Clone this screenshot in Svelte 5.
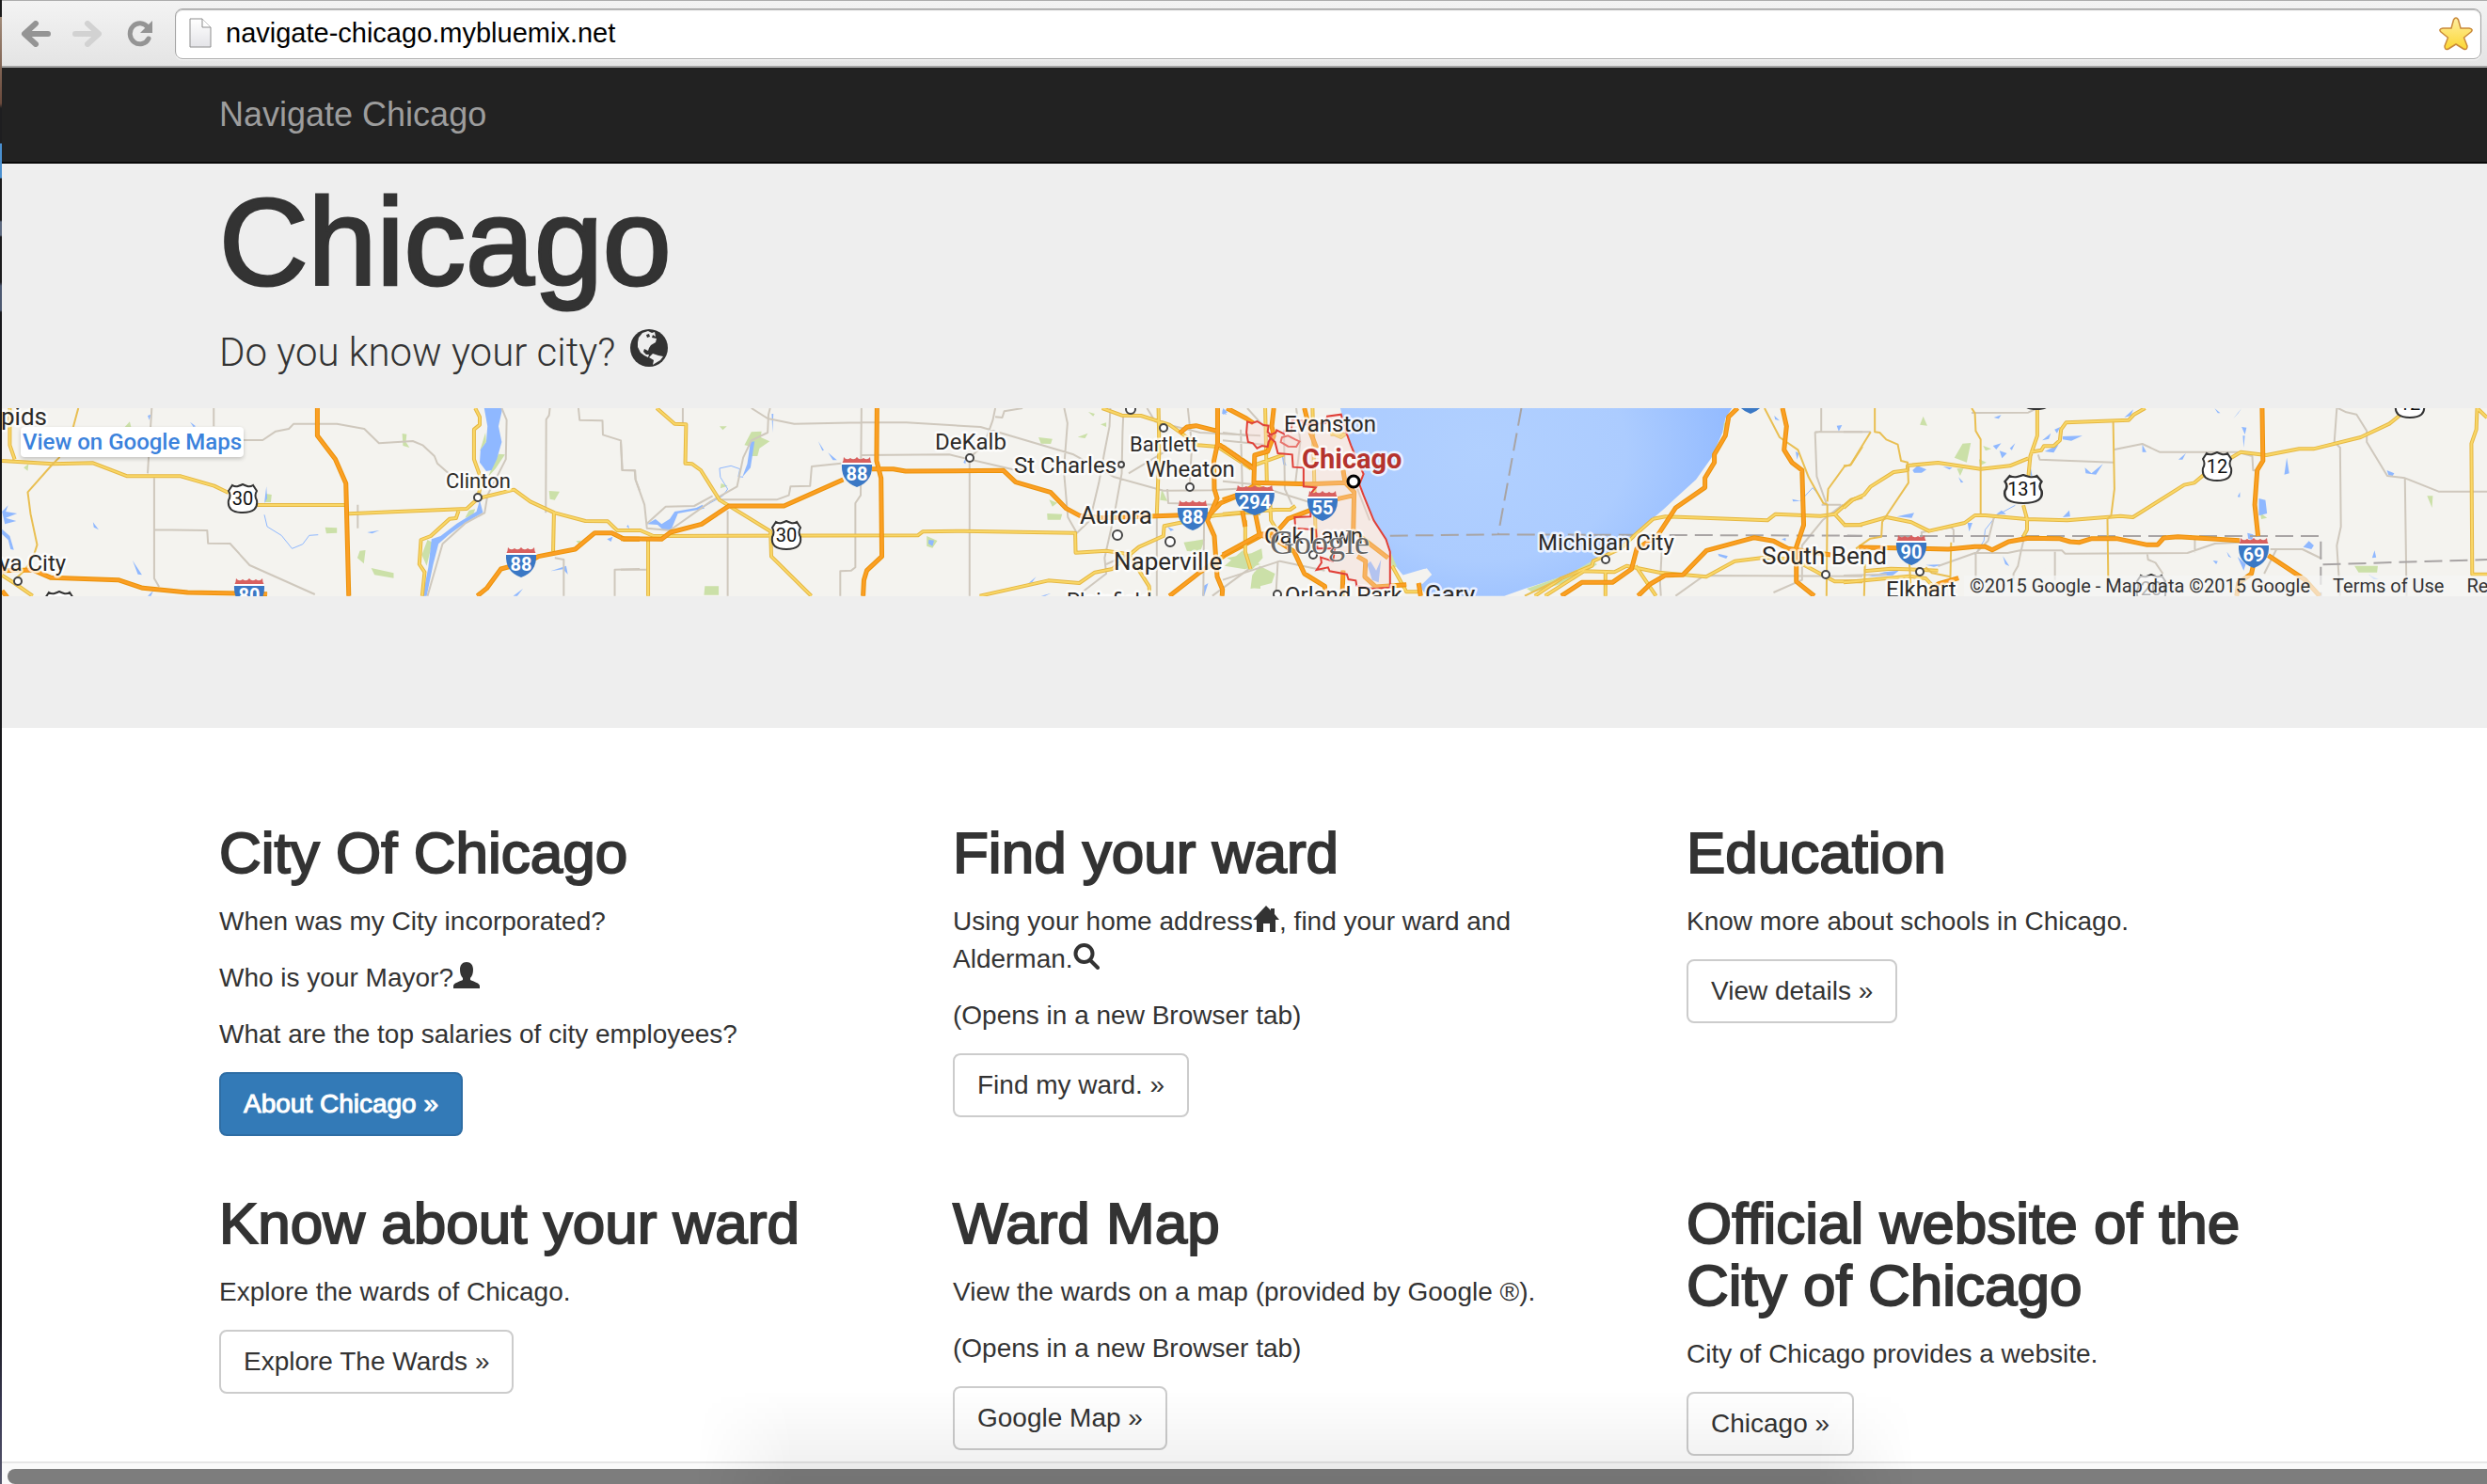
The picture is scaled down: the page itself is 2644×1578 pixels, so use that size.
<script>
let url = "navigate-chicago.mybluemix.net";

// the map strip is cut in tiles, each with its own origin and a 1568 x 690 grid
const tiles = [
    {
        x: 0,
        scale: 0.43367,
        green: "M318,85 L322,105 L306,102Z M58,232 L70,220 L68,242Z M652,315 L666,318 L664,342 L650,342Z M797,422 L826,424 L826,440 L800,442Z M882,497 L896,495 L892,538 L876,520Z M910,552 L965,568 L965,584 L918,574Z M986,123 L997,125 L995,150 L1004,168 L988,162Z M1346,306 L1372,308 L1360,335 L1348,332Z M1190,120 L1192,150 L1176,180Z M1222,188 L1238,190 L1215,235 L1196,262Z M1048,462 L1060,470 L1046,545 L1034,510Z M1150,368 L1165,364 L1160,382 L1140,392Z M1412,466 L1424,464 L1420,476Z",
        water: "M1187,42 L1232,42 L1222,100 L1230,150 L1218,205 L1205,240 L1192,243 L1176,215 L1178,175 L1192,150 L1195,100Z M1176,336 L1184,375 L1140,408 L1100,446 L1075,475 L1062,540 L1046,641 L1036,641 L1050,550 L1058,460 L1080,450 L1120,410 L1168,372Z M5,372 L20,352 L14,372 L42,378 L14,392 L40,402 L12,412Z M5,428 L24,450 L34,494 L26,492 L20,462 L5,444Z M228,406 L242,430 L230,422Z M325,528 L348,574 L338,572Z M362,66 L370,62 L366,80Z M466,86 L480,100 L474,102Z M648,345 L653,292 L655,330Z M900,438 L930,432 L912,442Z M1258,641 L1282,618 L1268,641Z M1350,562 L1388,545 L1392,572 L1380,556Z M362,641 L376,624 L370,641Z M1488,460 L1502,452 L1498,468Z M1536,420 L1540,414 L1543,426Z",
        stream: "M648,382 L655,420 L690,448 L716,490 L742,476 L758,448 L780,446",
        grey: "M372,42 L362,250 M378,265 L378,430 L508,432 L510,473 L564,474 L612,543 L772,636 M378,430 L378,585 L390,612 M524,42 L524,100 M590,144 L644,144 L676,116 L708,108 L720,92 L826,92 L893,108 L929,154 L1012,147 L1036,160 L1065,195 L1072,218 L1110,262 M1230,42 L1242,80 L1240,205 L1195,320 L1188,376 L1140,410 L1085,475 L1048,641 M1348,42 L1346,65 L1339,78 L1338,376 M1360,520 L1382,525 L1382,641 M1418,42 L1421,80 L1477,82 L1478,127 L1522,145 L1525,240 L1557,241 L1558,270 L1568,305 M1507,641 L1507,557 L1568,555 M877,350 L877,425",
        yellow: "M24,42 L24,160 L36,205 M5,210 L130,220 L228,217 L312,259 L443,259 L525,290 L560,312 M630,351 L850,351 M855,379 L975,372 L1144,363 L1172,330 L1260,302 L1300,340 L1360,376 L1435,402 L1490,403 L1513,432 L1568,432 M1358,376 L1356,500 M1165,42 L1176,70 L1176,95 L1162,110 L1162,205 L1180,270 L1172,330 M1124,370 L1118,393 L1102,395 L1056,450 L1032,462 L1028,540 L1041,565 L1035,641 M5,575 L35,600 L80,641",
        thin: "M192,42 L180,100 L145,200 L128,222 L68,310 L75,380 L91,478 L82,515 L60,560 L35,590",
        orange: "M778,42 L778,130 L822,205 L848,282 L855,641 M5,560 L80,558 L125,583 L290,590 L350,616 L460,630 L655,635 M1170,641 L1193,617 L1228,555 L1300,530 L1320,515 L1410,492 L1458,440 L1500,440 L1530,460 L1568,460 M5,625 L18,645",
        dashed: ""
    },
    {
        x: 660,
        scale: 0.43367,
        green: "M242,100 L260,100 L250,112Z M320,118 L345,116 L343,135 L365,148 L340,170 L335,195 L318,195 L322,165 L303,160Z M246,282 L262,290 L244,298Z M206,610 L240,610 L240,638 L204,638Z M750,450 L776,465 L764,488 L750,482Z M1024,135 L1058,140 L1054,156 L1030,155Z M1045,378 L1082,380 L1078,398 L1046,398Z M1050,334 L1070,344 L1058,356Z M1146,54 L1162,60 L1158,68Z M1176,94 L1190,88 L1190,102Z M1326,300 L1340,338 L1322,335Z M1120,134 L1145,122 L1138,138Z M1380,470 L1432,460 L1420,500 L1388,498Z M1480,545 L1525,495 L1530,520 L1568,540 L1530,556Z M1552,566 L1568,560 L1568,618 L1545,616Z",
        water: "M64,412 L85,396 L100,412 L120,395 L132,372 L185,360 L200,350 L205,362 L140,378 L124,428 L105,432 L90,414Z M318,150 L328,148 L318,232 L298,262 L310,220Z M370,60 L374,60 L372,120Z M484,148 L498,176 L494,178Z M508,184 L530,208 L520,208Z M755,462 L768,464 L764,482 L754,474Z M1340,420 L1356,430 L1348,434Z M1425,640 L1428,610 L1440,600 L1430,641Z M840,215 L846,200 L845,220Z M1000,600 L1018,580 L1008,598Z M1030,641 L1055,632 L1040,641Z M1475,48 L1486,62 L1474,60Z",
        stream: "M205,355 L250,322 L262,300 L244,262 L242,234 L270,226 L292,236 L288,260 L300,262",
        grey: "M0,150 L4,240 L34,241 L36,270 L58,350 L64,425 L120,432 L220,340 L285,292 L300,200 L320,145 L360,120 L362,62 L366,42 M64,410 L110,356 L180,354 L225,322 M152,42 L152,92 M245,334 L382,334 L412,320 L416,292 L464,290 L468,228 L540,218 M320,42 L360,75 L425,92 L590,88 L700,88 L882,102 L1110,190 L1210,262 L1330,305 L1450,304 L1530,298 M262,370 L262,641 M590,42 L588,320 L575,345 L575,550 L565,560 L538,562 L538,641 M590,192 L805,190 L962,238 L1000,238 M855,200 L855,641 M855,200 L890,160 L912,80 L918,42 M918,70 L935,72 L940,52 L985,42 M0,557 L62,557 M1087,42 L1095,90 L1086,240 L1096,390 L1118,440 L1150,400 L1172,280 L1186,180 L1198,100 L1200,42 M1232,60 L1230,120 L1228,250 L1210,380 L1186,520 L1190,570 L1130,630 M1290,42 L1310,85 L1420,120 L1568,130 M1340,300 L1342,345 L1460,350 M1314,380 L1314,641 M1430,380 L1428,641 M1245,250 L1360,160 M1390,42 L1400,160 L1394,300 M1450,641 L1545,550 M1190,540 L1250,505",
        yellow: "M88,42 L132,92 L160,94 L158,218 L175,220 L196,240 L242,335 L367,435 L369,515 L467,641 M0,432 L48,432 L80,450 L728,448 L740,436 L840,434 L1114,440 L1115,503 L1190,497 L1245,508 M67,465 L67,641 M880,641 L1048,592 L1124,600 L1162,566 L1205,555 L1270,485 L1330,450 L1332,418 L1455,385 L1540,375 L1568,378 M1318,42 L1320,170 L1314,380 M1180,42 L1228,65 L1275,66 L1345,95 L1415,160 L1463,165 L1545,235 M1245,508 L1295,610 L1297,641",
        thin: "M1530,420 L1530,510 L1545,552",
        orange: "M0,458 L100,460 L122,438 L198,412 L265,354 L400,354 L545,270 M615,236 L668,236 L698,243 L938,241 L968,278 L1053,310 L1092,362 L1125,385 L1180,392 L1445,380 L1470,345 L1520,318 M628,42 L627,210 L638,265 L640,515 L603,560 L596,590 L594,641 M1463,42 L1463,155 L1454,210 L1455,300 L1462,330 L1438,400 L1455,450 L1462,580 L1475,620 L1474,641 M1370,122 L1388,102 L1410,98 L1463,115 M1463,155 L1555,235 M1568,450 L1480,512 L1420,565 L1345,641",
        dashed: ""
    },
    {
        x: 1300,
        scale: 0.43367,
        green: "M10,520 L70,505 L95,490 L98,520 L70,560Z M90,545 L128,570 L120,600 L68,618 L72,575Z M1228,90 L1240,85 L1228,125Z M905,530 L918,540 L860,590 L760,630 L745,618 L850,570Z M410,498 L426,545 L415,560Z",
        water: "M1352,66 L1365,82 L1354,78Z M1404,180 L1412,186 L1408,206Z M1505,98 L1518,96 L1510,116Z M1214,506 L1238,514 L1234,522 L1216,514Z M1396,332 L1416,338 L1398,340Z M1370,460 L1380,456 L1380,466Z M144,185 L156,225 L148,222Z M354,540 L366,590 L382,598 L388,525 L376,560 L362,530Z M0,42 L12,55 L0,62Z",
        stream: "M1416,338 L1446,296 L1462,320",
        grey: "M44,110 L48,300 M0,145 L110,160 M0,120 L60,130 M0,275 L75,285 M150,110 L152,300 L170,350 M110,300 L220,345 M60,42 L100,100 M0,590 L140,530 L250,560 M135,530 L130,641 M1467,42 L1467,116 L1452,120 L1456,260 L1480,348 M1452,118 L1568,118 M1468,350 L1515,350 M1520,350 L1470,400 L1420,480 L1420,590 L1350,630 M1065,460 L1076,500 L1072,600 L1074,641 M1110,641 L1180,576 L1568,578 M180,42 L190,150 L178,280 M360,400 L330,300",
        yellow: "M104,42 L108,280 M75,285 L115,310 L118,400 L132,430 M0,380 L70,372 L130,366 L165,366 L178,354 M55,400 L55,500 L68,555 M220,42 L228,480 M150,190 L75,225 M264,120 L290,135 L300,125 L264,125 M1055,395 L1085,388 L1335,400 L1355,380 L1465,386 L1500,380 L1540,335 L1568,325 M1500,380 L1525,415 L1568,415 M1055,395 L1012,445 L975,490 L908,530 L905,545 L830,585 L765,641 M790,641 L885,562 L960,565 L990,545 L1070,566 L1185,580 L1255,530 L1330,518 L1400,525 L1500,595 L1568,595 M938,565 L938,641 M1012,545 L1062,641 M415,545 L450,628 L480,628",
        thin: "M1328,42 L1365,135 L1410,175 L1436,262 L1472,345 L1482,350 L1480,641 M1482,340 L1484,300 L1524,228 L1540,222 L1568,165 M740,641 L870,560",
        orange: "M10,42 L58,75 L75,90 M0,165 L75,235 M125,42 L120,100 L125,130 L110,180 L78,192 L76,280 L210,284 L300,280 L295,240 M200,42 L215,120 L230,170 M300,280 L322,310 L320,430 L345,460 L405,520 M0,335 L45,315 L76,290 M322,320 L270,335 L210,370 L160,395 L130,440 L90,445 L0,510 M48,370 L55,420 M80,380 L90,445 L140,470 L175,500 L200,570 L250,610 L252,641 M330,515 L350,530 L348,580 L375,612 L450,605 M295,560 L293,641 M480,600 L485,641 M1262,42 L1240,70 L1232,130 L1205,190 L1205,215 L1182,265 L1182,295 L1110,360 L1065,450 L1015,490 L1002,555 L955,598 L880,598 L830,641 M1372,42 L1382,100 L1376,175 L1395,215 L1420,240 L1424,415 L1406,485 L1406,595 L1450,641 M1018,641 L1048,603 L1085,575 L1128,574 L1186,496 L1303,455 L1350,466 L1385,490 L1490,510",
        dashed: "M732,42 L675,445 M410,449 L675,445 L1568,449"
    },
    {
        x: 1960,
        scale: 0.43622,
        green: "M270,200 L290,155 L310,153 L300,215Z M186,95 L194,68 L204,98Z M340,162 L360,172 L346,178Z M330,205 L348,215 L332,226Z M276,235 L292,235 L284,258Z M1245,545 L1302,545 L1300,566 L1255,566Z M1422,322 L1436,322 L1434,360Z M1015,375 L1032,392 L1018,396Z",
        water: "M168,240 L180,226 L202,238 L190,248 L172,248Z M242,228 L265,232 L258,238Z M280,262 L292,278 L286,280Z M366,72 L384,64 L378,76Z M364,162 L384,154 L372,174Z M380,178 L398,186 L386,202Z M405,170 L418,154 L410,176Z M484,145 L505,122 L500,140Z M514,110 L528,102 L520,122Z M534,132 L582,130 L555,146 L534,142Z M490,180 L524,158 L512,184Z M588,232 L604,250 L632,220 L615,254 L590,250Z M728,158 L738,182 L728,182Z M816,206 L834,186 L826,206Z M684,72 L706,46 L700,66Z M904,42 L918,58 L912,58Z M950,75 L970,42 L962,58Z M970,102 L982,104 L978,126Z M973,130 L978,130 L975,168Z M1080,200 L1086,250 L1074,254Z M960,325 L966,310 L966,326Z M1012,330 L1028,335 L1032,378 L1012,385Z M984,440 L998,445 L996,462 L986,458Z M1120,485 L1134,466 L1146,480 L1140,492Z M1288,520 L1294,496 L1298,518Z M1324,240 L1342,250 L1338,258 L1328,256Z M130,388 L150,382 L172,376 L166,392Z M302,408 L314,408 L306,436Z M534,390 L550,368 L552,388Z M372,380 L385,368 L396,380Z M200,542 L245,540 L220,548Z M60,580 L100,565 L135,560 L120,575Z M900,528 L912,530 L908,540Z M934,500 L945,520 L938,515Z M960,516 L980,540 L975,560Z M1280,574 L1304,588 L1292,588Z M388,514 L404,546 L394,540Z M488,548 L497,566 L494,560Z M455,225 L460,260 L454,255Z",
        stream: "M418,352 L372,385 L345,430 L342,465 L320,510",
        grey: "M0,118 L66,118 M312,57 L450,56 L472,42 M660,174 L728,156 L770,182 L960,182 L996,195 L998,240 L1008,242 M474,190 L478,206 L658,215 M1202,42 L1196,150 L1210,168 L1212,420 L1202,480 L1210,641 M1205,42 L1225,55 L1250,62 L1275,115 L1275,150 L1325,258 L1368,265 L1450,308 L1568,308 M1368,265 L1372,641 M190,455 L190,438 L262,422 L268,430 L268,470 M230,546 L320,504 L400,504 L430,496 L532,496 L540,506 L838,504 L905,474 L965,470 M440,455 L432,500 L425,545 L414,570 L414,590 M366,392 L352,465 L322,505 L322,590 M515,500 L515,590 M740,506 L742,525 L760,535 L778,570 M856,450 L856,502 M1040,492 L1118,492 L1165,522 M1055,492 L1025,570 M0,576 L105,572",
        yellow: "M0,360 L22,335 L50,318 L66,292 L122,246 L156,240 L156,225 L230,216 L334,236 L405,226 L450,202 M0,415 L40,414 L105,390 L165,406 L208,434 L295,408 L320,384 L345,384 L445,396 L545,400 L675,386 L705,390 L830,287 L855,280 L880,252 M945,200 L968,182 L1030,192 L1110,172 L1145,172 L1260,135 L1330,92 L1360,60 M472,42 L472,130 L455,195 L450,262 M438,352 L447,395 L447,430 L438,452 M455,182 L482,176 L488,163 L512,163 L527,145 L530,110 L542,88 L695,80 L708,62 L735,42 M1544,42 L1542,110 L1530,155 L1532,572 L1568,572 M1544,42 L1568,72 M50,562 L115,554 L230,560 M0,598 L160,578 L200,585 L240,641",
        thin: "M76,42 L76,118 L88,120 L104,142 L132,158 L140,210 L156,215 L158,280 L94,405 L92,452 L65,458 L30,490 M66,118 L16,224 L0,226 M312,42 L320,58 L322,115 L334,142 L334,380 M657,85 L660,300 L652,385 L643,395 L645,590 M262,470 L260,590 M160,530 L165,641 M52,540 L50,641 M200,550 L215,568 L260,580",
        orange: "M38,486 L130,488 L255,492 L320,484 L345,484 L362,494 L402,468 L450,457 L525,458 L552,468 L575,470 L605,458 L665,458 L740,478 L765,478 L780,456 L815,452 L965,464 M1020,42 L1022,210 L1008,240 L1002,350 L1010,450 M1035,512 L1125,590 L1160,641 M998,545 L994,570 L962,600 L958,641 M280,584 L232,602 L200,630",
        dashed: "M0,450 L1163,450 L1163,641 M1168,541 L1568,525"
    }
];

const interstates = [
    { x: 554, y: 148, no: "88" },
    { x: 265, y: 181, no: "80" },
    { x: 911, y: 52, no: "88" },
    { x: 1268, y: 98, no: "88" },
    { x: 1334, y: 82, no: "294" },
    { x: 1406, y: 88, no: "55" },
    { x: 2032, y: 135, no: "90" },
    { x: 2396, y: 138, no: "69" },
    { x: 1861, y: -26, no: "" }
];

const highways = [
    { x: 258, y: 81, no: "30" },
    { x: 836, y: 120, no: "30" },
    { x: 2151, y: 71, no: "131" },
    { x: 2357, y: 47, no: "12" },
    { x: 2562, y: -20, no: "12" },
    { x: 2165, y: -29, no: "" },
    { x: 2287, y: 177, no: "20" },
    { x: 63, y: 195, no: "" }
];

const towns = [
    [508, 95, 4], [19, 184, 4], [1031, 53, 4], [1192, 60, 3], [1202, 1, 5],
    [1237, 21, 4], [1265, 84, 4], [1188, 135, 5], [1244, 142, 5], [1396, 156, 4],
    [1358, 198, 4], [1707, 161, 4], [1941, 177, 4], [2041, 174, 4]
];

const labels = [
    { x: 1, y: 18, size: 26, name: "pids" },
    { x: -1, y: 173, size: 24, name: "va City" },
    { x: 474, y: 85, size: 22, name: "Clinton" },
    { x: 994, y: 44, size: 24, name: "DeKalb" },
    { x: 1078, y: 69, size: 24, name: "St Charles" },
    { x: 1201, y: 46, size: 22, name: "Bartlett" },
    { x: 1218, y: 73, size: 24, name: "Wheaton" },
    { x: 1148, y: 123, size: 26, name: "Aurora" },
    { x: 1184, y: 172, size: 26, name: "Naperville" },
    { x: 1134, y: 212, size: 22, name: "Plainfield" },
    { x: 1365, y: 25, size: 24, name: "Evanston" },
    { x: 1344, y: 144, size: 24, name: "Oak Lawn" },
    { x: 1366, y: 207, size: 24, name: "Orland Park" },
    { x: 1515, y: 207, size: 26, name: "Gary" },
    { x: 1635, y: 151, size: 24, name: "Michigan City" },
    { x: 1873, y: 166, size: 26, name: "South Bend" },
    { x: 2005, y: 201, size: 24, name: "Elkhart" }
];
</script>

<div class="window">
    <div class="toolbar">
        <button class="tool" aria-label="Back">
            <svg width="32" height="28" viewBox="0 0 32 28"><path d="M16,3 L4,14 L16,25 M5,14 H29" /></svg>
        </button>
        <button class="tool faded" aria-label="Forward" disabled>
            <svg width="32" height="28" viewBox="0 0 32 28"><path d="M16,3 L28,14 L16,25 M27,14 H3" /></svg>
        </button>
        <button class="tool reload" aria-label="Reload">
            <svg width="28" height="28" viewBox="0 0 28 28">
                <path class="arc" d="M23,19 A10.5,11 0 1 1 22,7" />
                <path class="head" d="M27,0 V13 H14Z" />
            </svg>
        </button>
        <div class="address">
            <svg class="page-icon" width="24" height="34" viewBox="0 0 24 34">
                <defs>
                    <linearGradient id="paper" x2="0" y2="1">
                        <stop offset="0" stop-color="#fff" />
                        <stop offset="1" stop-color="#e4e4e8" />
                    </linearGradient>
                </defs>
                <path d="M1,1 H14 L23,10 V31 H1Z" fill="url(#paper)" stroke="#8d8d8d" />
                <path d="M14,1 V10 H23" fill="#fff" stroke="#8d8d8d" />
            </svg>
            <input class="url" aria-label="Address" bind:value={url} spellcheck="false" autocomplete="off" />
            <button class="star" aria-label="Bookmark">
                <svg width="36" height="36" viewBox="0 0 36 36">
                    <defs>
                        <linearGradient id="gold" x2="0" y2="1">
                            <stop offset="0" stop-color="#ffeea0" />
                            <stop offset="1" stop-color="#fcd733" />
                        </linearGradient>
                    </defs>
                    <path d="M15.500,3 Q18,-1 20.500,3 L23,12 L32,12 Q37,13 34,16 L26.500,22 L30,31 Q30,36 26,34 L18,29 L10,34 Q6,36 6,31 L9.500,22 L2,16 Q-1,13 4,12 L13,12Z" fill="url(#gold)" stroke="#c9893a" stroke-width="1.500" stroke-linejoin="round" />
                </svg>
            </button>
        </div>
    </div>

    <div class="page">
        <nav class="navbar">
            <div class="container">
                <a class="brand" href="#home">Navigate Chicago</a>
            </div>
        </nav>

        <header class="jumbotron">
            <div class="container">
                <h1>Chicago</h1>
                <p class="lead">
                    Do you know your city?
                    <svg class="globe" viewBox="0 0 40 40">
                        <circle cx="20" cy="20" r="20" fill="#333" />
                        <path fill="#eee" d="M9,9 L13,4 L19,2 L23,4 L26,3 L27,8 L24,6 L23,9 L28,10 L27,14 L22,17 L20,20 L19,23 L15,21 L14,24 L17,27 L20,27 L19,30 L15,28 L11,25 L8,19 L8,14Z M24,26 L30,28 L35,29 L32,33 L27,36 L24,38 L25,33 L20,30Z" />
                        <path fill="#333" d="M17,6 L20,5 L21,8 L18,9Z" />
                    </svg>
                </p>
            </div>

            <div class="map">
                <svg class="map-canvas" viewBox="2 0 2642 200" preserveAspectRatio="xMinYMin slice" role="img" aria-label="Map of Chicago">
                    <defs>
                        <radialGradient id="lake" gradientUnits="userSpaceOnUse" cx="640" cy="180" r="700">
                            <stop offset="0" stop-color="#b1d0ff" />
                            <stop offset="0.5" stop-color="#acccff" />
                            <stop offset="1" stop-color="#8bb5ff" />
                        </radialGradient>
                    </defs>
                    <rect x="0" y="0" width="2644" height="200" fill="#f4f3ef" />

                    <g transform="translate(1300 -14) scale(0.43367 0.33333)">
                        <path fill="url(#lake)" d="M288,42 L1248,42 L1232,75 L1225,120 L1198,200 L1160,270 L1080,365 L1012,440 L985,480 L905,530 L860,568 L740,618 L690,641 L500,641 L480,605 L512,572 L500,553 L445,580 L420,540 L405,470 L372,410 L345,320 L338,285 L345,255 L315,160 L300,100Z" />
                        <path fill="#f4f3ef" d="M440,575 L475,562 L495,554 L512,574 L490,602 L455,600Z" />
                    </g>

                    {#each tiles as tile}
                        <g transform="translate({tile.x} -14) scale({tile.scale} 0.33333)">
                            <path class="green" d={tile.green} />
                            <path class="water" d={tile.water} />
                            <path class="line stream" d={tile.stream} />
                            <path class="line grey" d={tile.grey} />
                            <path class="line dashed" d={tile.dashed} />
                            <path class="line yellow-edge" d={tile.yellow} />
                            <path class="line yellow" d={tile.yellow} />
                            <path class="line thin" d={tile.thin} />
                            <path class="line orange-edge" d={tile.orange} />
                            <path class="line orange" d={tile.orange} />
                        </g>
                    {/each}

                    <g class="city" transform="translate(1300 -14) scale(0.43367 0.33333)">
                        <path d="M60,85 L72,90 L84,84 L100,96 L112,98 L110,118 L120,130 L112,150 L110,165 L96,162 L84,170 L74,154 L62,150 L58,120Z" />
                        <path d="M145,135 L160,130 L178,142 L188,148 L180,165 L160,164 L142,150Z" />
                        <path d="M112,130 L130,120 L132,112 L150,124 L152,115 L168,118 L170,80 L195,82 L198,94 L252,90 L256,68 L290,62 L300,110 L314,160 L325,195 L345,252 L335,285 L345,320 L370,400 L400,460 L410,500 L410,614 L370,618 L328,608 L326,592 L308,588 L304,572 L262,562 L258,550 L230,558 L242,535 L240,518 L270,530 L275,490 L232,490 L228,430 L178,425 L176,390 L215,388 L218,310 L228,295 L198,292 L198,232 L172,230 L170,190 L135,186 L128,150 L118,138Z" />
                    </g>

                    {#each towns as [x, y, r]}
                        <circle class="town" cx={x} cy={y} {r} />
                    {/each}
                    <circle class="town main" cx="1439" cy="78" r="6" />

                    {#each interstates as road}
                        <g transform="translate({road.x} {road.y}) scale({road.no.length > 2 ? 1.3 : 1} 1)">
                            <path fill="#d8605f" d="M-16,7 Q-14,4 -14,0 Q-11,4 -7,1 Q-3,4 0,0 Q3,4 7,1 Q11,4 14,0 Q14,4 16,7Z" />
                            <path fill="#fff" d="M-16,6 H16 V9 H-16Z" />
                            <path fill="#3a78c5" d="M-16,8 H16 Q17,26 0,32 Q-17,26 -16,8Z" />
                        </g>
                        <text class="shield-no white" x={road.x} y={road.y + 25}>{road.no}</text>
                    {/each}

                    {#each highways as road}
                        <g transform="translate({road.x} {road.y}) scale({road.no.length > 2 ? 1.3 : 1} 1)">
                            <path class="us" d="M-11,1 Q-8,3 -5,2 Q-2,1 0,0 Q2,1 5,2 Q8,3 11,1 L15,7 Q12,12 15,17 Q17,30 0,30 Q-17,30 -15,17 Q-12,12 -15,7Z" />
                        </g>
                        <text class="shield-no" x={road.x} y={road.y + 22}>{road.no}</text>
                    {/each}

                    {#each labels as label}
                        <text class="label" x={label.x} y={label.y} font-size={label.size}>{label.name}</text>
                    {/each}
                    <text class="label chicago" x="1384" y="64" font-size="29">Chicago</text>
                    <text class="watermark" x="1350" y="155">Google</text>
                </svg>
                <a class="map-link" href="#map">View on Google Maps</a>
                <div class="map-credits">
                    <span>©2015 Google - Map data ©2015 Google</span>
                    <a href="#terms">Terms of Use</a>
                    <a href="#report">Report a map error</a>
                </div>
            </div>
        </header>

        <main class="container">
            <div class="row">
                <section>
                    <h2>City Of Chicago</h2>
                    <p>When was my City incorporated?</p>
                    <p>
                        Who is your Mayor?<svg class="icon" viewBox="0 0 28 28"><path d="M14,0 C18.500,0 21,3 21,8 C21,12 20,15 18,17 V19 C22,21 27,22 28,25 V28 H0 V25 C1,22 6,21 10,19 V17 C8,15 7,12 7,8 C7,3 9.500,0 14,0Z" /></svg>
                    </p>
                    <p>What are the top salaries of city employees?</p>
                    <p><a class="btn primary" href="#about">About Chicago »</a></p>
                </section>
                <section>
                    <h2>Find your ward</h2>
                    <p>
                        Using your home address<svg class="icon" viewBox="0 0 28 28"><path d="M14,0 L19,5 V3 H23 V9 L28,15 H24 V28 H18 V19 H11 V28 H4 V15 H0Z" /></svg>, find your ward and Alderman.<svg class="icon search" viewBox="0 0 28 28"><circle cx="11.500" cy="11" r="9" /><path d="M18,18 L26,26" /></svg>
                    </p>
                    <p>(Opens in a new Browser tab)</p>
                    <p><a class="btn" href="#find">Find my ward. »</a></p>
                </section>
                <section>
                    <h2>Education</h2>
                    <p>Know more about schools in Chicago.</p>
                    <p><a class="btn" href="#education">View details »</a></p>
                </section>
            </div>
            <div class="row">
                <section>
                    <h2>Know about your ward</h2>
                    <p>Explore the wards of Chicago.</p>
                    <p><a class="btn" href="#wards">Explore The Wards »</a></p>
                </section>
                <section>
                    <h2>Ward Map</h2>
                    <p>View the wards on a map (provided by Google ®).</p>
                    <p>(Opens in a new Browser tab)</p>
                    <p><a class="btn" href="#ward-map">Google Map »</a></p>
                </section>
                <section>
                    <h2>Official website of the City of Chicago</h2>
                    <p>City of Chicago provides a website.</p>
                    <p><a class="btn" href="#official">Chicago »</a></p>
                </section>
            </div>
        </main>
    </div>

    <div class="scrollbar">
        <div class="thumb"></div>
    </div>
    <div class="shade"></div>
</div>

<style>
:global(body) {
    margin: 0;
    background: #fff;
}

.window {
    position: relative;
    display: flex;
    flex-direction: column;
    box-sizing: border-box;
    height: 100vh;
    padding-left: 2px;
    overflow: hidden;

    color: #333;
    background: linear-gradient(#1c1c1c 18px, #a08a78 18px, #6b4a3c 110px, #1e1e20 115px, #1e1e20 152px, #4a90d0 153px, #4a90d0 189px, #1a1a1c 190px, #1a1a1c 234px, #5d6a80 236px, #5d6a80 250px, #1a1a1c 252px, #1a1a1c 300px, #4c5870 304px, #4c5870 330px, #17171a 332px, #17171a 1400px, #3a3a55 1500px, #55556a);
    font-family: "Liberation Sans", Arial, sans-serif;
    font-size: 28px;
    line-height: 40px;
}

a {
    color: inherit;
    text-decoration: none;
}

button {
    padding: 0;
    border: 0;
    background: none;
}

svg {
    display: block;
}

/* browser toolbar */
.toolbar {
    display: flex;
    flex: none;
    align-items: center;
    box-sizing: border-box;
    height: 72px;
    padding: 0 6px 0 20px;

    border-top: 1px solid #adadad;
    border-bottom: 2px solid #a2a2a2;
    background: linear-gradient(#f3f3f3, #e4e4e4);
}

.tool {
    margin-right: 23px;
}

.tool path {
    fill: none;
    stroke: #949494;
    stroke-width: 6;
    stroke-linecap: round;
    stroke-linejoin: round;
}

.tool.faded path {
    stroke: #d2d2d2;
}

.tool.reload {
    margin: 0 23px 0 3px;
}

.tool .arc {
    stroke-width: 5;
}

.tool .head {
    fill: #949494;
    stroke: none;
}

.address {
    display: flex;
    flex: 1;
    align-items: center;
    box-sizing: border-box;
    height: 54px;
    padding: 0 8px 0 14px;

    border: 1px solid #a3a3a3;
    border-radius: 8px;
    background: #fff;
    box-shadow: inset 0 1px 1px #bbb, 0 1px 0 #fff;
}

.url {
    flex: 1;
    height: 40px;
    padding: 0;
    margin-left: 15px;

    border: 0;
    outline: 0;
    background: transparent;
    color: #000;
    font: 29px "Liberation Sans", Arial, sans-serif;
}

/* page */
.page {
    flex: 1;
    min-height: 0;
    overflow: hidden;
    background: #fff;
}

.container {
    box-sizing: border-box;
    max-width: 2340px;
    margin-left: 201px;
    padding: 0 30px;
}

.navbar {
    padding: 30px 0;
    border-bottom: 2px solid #080808;
    background: #222;
}

.brand {
    display: block;
    color: #9d9d9d;
    font-size: 36px;
}

.jumbotron {
    padding: 21px 0 140px;
    background: #eee;
}

h1 {
    margin: 0 0 24px;
    font-size: 131px;
    font-weight: 400;
    line-height: 126px;
    -webkit-text-stroke: 3px #333;
}

.lead {
    display: flex;
    gap: 16px;
    margin: 0 0 29px;

    font-family: Roboto, sans-serif;
    font-size: 42px;
    font-weight: 300;
    line-height: 60px;
}

.globe {
    width: 40px;
    height: 40px;
    margin-top: 5px;
}

/* map */
.map {
    position: relative;
    height: 200px;
    overflow: hidden;
    font-family: Roboto, sans-serif;
}

.map-canvas {
    width: 100%;
    height: 200px;
}

.green {
    fill: #cbe0a8;
}

.water {
    fill: #8fb8ff;
}

.line {
    fill: none;
    stroke-linejoin: round;
    vector-effect: non-scaling-stroke;
}

.stream {
    stroke: #8fb8ff;
    stroke-width: 1px;
}

.grey {
    stroke: #cfc8bd;
    stroke-width: 2px;
}

.dashed {
    stroke: #a8a4a4;
    stroke-width: 2px;
    stroke-dasharray: 19 8;
}

.yellow-edge {
    stroke: #e5b742;
    stroke-width: 4px;
}

.yellow {
    stroke: #f9d768;
    stroke-width: 2px;
}

.thin {
    stroke: #e9bf52;
    stroke-width: 2px;
}

.orange-edge {
    stroke: #eb9208;
    stroke-width: 5px;
}

.orange {
    stroke: #fb9f24;
    stroke-width: 3px;
}

.city path {
    fill: rgba(245, 215, 208, 0.35);
    stroke: #e04038;
    stroke-width: 2px;
    vector-effect: non-scaling-stroke;
}

.town {
    fill: #fff;
    stroke: #444;
    stroke-width: 2px;
}

.town.main {
    stroke: #000;
    stroke-width: 3px;
}

.us {
    fill: #fff;
    stroke: #333;
    stroke-width: 2px;
}

.shield-no {
    fill: #111;
    font-size: 20px;
    text-anchor: middle;
}

.shield-no.white {
    fill: #fff;
    font-weight: 700;
}

.label {
    fill: #2c2a28;
    stroke: rgba(255, 255, 255, 0.75);
    stroke-width: 5px;
    stroke-linejoin: round;
    paint-order: stroke;
}

.label.chicago {
    fill: #b5332d;
    font-weight: 700;
}

.watermark {
    fill: #666;
    stroke: rgba(255, 255, 255, 0.6);
    stroke-width: 2px;
    paint-order: stroke;
    font-family: "Liberation Serif", serif;
    font-size: 36px;
}

.map-link {
    position: absolute;
    top: 20px;
    left: 20px;
    padding: 0 2px;

    border-radius: 4px;
    background: #fff;
    box-shadow: 0 2px 4px rgba(0, 0, 0, 0.2);
    color: #3b82dc;
    font-size: 24px;
    font-weight: 500;
    line-height: 32px;
}

.map-credits {
    position: absolute;
    right: 0;
    bottom: 0;
    display: flex;
    gap: 24px;
    box-sizing: border-box;
    width: 556px;
    padding-left: 6px;
    overflow: hidden;

    background: rgba(245, 245, 245, 0.7);
    color: #333;
    font-size: 20px;
    line-height: 22px;
    white-space: nowrap;
}

/* columns */
main.container {
    padding-top: 60px;
}

.row {
    display: grid;
    grid-template-columns: repeat(3, 1fr);
    column-gap: 60px;
}

h2 {
    margin: 40px 0 20px;
    padding-right: 30px;
    font-size: 62px;
    font-weight: 400;
    line-height: 66px;
    -webkit-text-stroke: 2px #333;
}

p {
    margin: 0 0 20px;
}

.icon {
    display: inline-block;
    width: 28px;
    height: 28px;
    fill: #333;
    vertical-align: -2px;
}

.icon.search {
    fill: none;
    stroke: #333;
    stroke-width: 4px;
    stroke-linecap: round;
}

.btn {
    display: inline-block;
    padding: 12px 24px;
    border: 2px solid #ccc;
    border-radius: 8px;
    vertical-align: top;
}

.btn.primary {
    border-color: #2e6da4;
    background: #337ab7;
    color: #fff;
    -webkit-text-stroke: 1px #fff;
}

/* bottom of the window */
.scrollbar {
    flex: none;
    padding: 6px 0 0 6px;
    border-top: 2px solid #e6e6e6;
    background: #fafafa;
}

.thumb {
    height: 16px;
    border-radius: 8px 0 0 8px;
    background: #7d7d7d;
}

.shade {
    position: absolute;
    bottom: 0;
    left: 28%;
    width: 49%;
    height: 100px;
    background: linear-gradient(transparent, rgba(0, 0, 0, 0.07));
    -webkit-mask-image: linear-gradient(to right, transparent, #000 8%, #000 92%, transparent);
    mask-image: linear-gradient(to right, transparent, #000 8%, #000 92%, transparent);
    pointer-events: none;
}
</style>
